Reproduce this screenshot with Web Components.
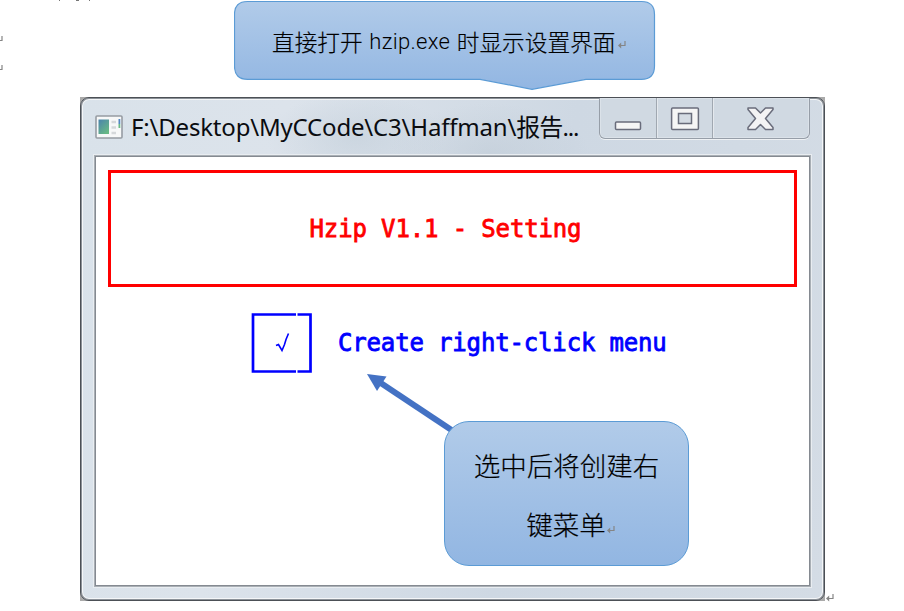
<!DOCTYPE html>
<html lang="zh-CN"><head><meta charset="utf-8"><title>Hzip</title>
<style>
html,body{margin:0;width:904px;height:611px;overflow:hidden;background:#fff}
</style></head><body><hzip-page></hzip-page>
<script>
function define(name, html){
  customElements.define(name, class extends HTMLElement{
    constructor(){super();const t=document.createElement('template');t.innerHTML=html;
      this.attachShadow({mode:'open'}).append(t.content.cloneNode(true));}
  });
}
define('return-mark', `<style>:host{display:inline-block;width:8px;height:9px}svg{display:block}</style>
<svg width="8" height="9" viewBox="0 0 8 9"><path d="M7 1V5.5H2" fill="none" stroke="#858585" stroke-width="1.2"/><path d="M0 5.5L3.2 2.6V8.4Z" fill="#858585"/></svg>`);

define('app-icon', `<style>:host{display:block;width:28px;height:24px;flex:none}</style>
<svg width="28" height="24" viewBox="0 0 28 24"><defs><linearGradient id="g" x1="0" y1="0" x2=".7" y2="1"><stop offset="0" stop-color="#4b83ad"/><stop offset="1" stop-color="#68b985"/></linearGradient></defs>
<rect x="1" y="1" width="26" height="22" rx="1" fill="#f7f8f8" stroke="#969ca3" stroke-width="1.6"/>
<rect x="3.5" y="4.5" width="10.5" height="14.5" fill="url(#g)"/>
<path d="M16.5 7h4.5M16.5 12.5h4.5M16.5 18h4.5" stroke="#d5d8da" stroke-width="2.6"/>
<path d="M24.4 4v5" stroke="#5287c2" stroke-width="1.8"/><path d="M24.4 9v4" stroke="#69ba86" stroke-width="1.8"/></svg>`);

define('caption-buttons', `<style>:host{display:grid;grid-template-columns:57px 56px 1fr;width:211px;height:41px;box-sizing:border-box;border:1px solid #969ea8;border-top:0;border-radius:0 0 6px 6px;box-shadow:inset 0 0 0 1px #e6ebf080,0 1px 0 #eef1f4;flex:none;background:#d0d9e2}
div{display:flex;justify-content:center;border-right:1px solid #a0a8b1;box-shadow:1px 0 #e4e9ee}div:last-child{border:0;box-shadow:none}svg{display:block}</style>
<div><svg width="56" height="40"><rect x="15.5" y="24" width="25" height="7.4" rx="1" fill="#f5f5f5" stroke="#696c7b" stroke-width="1.5"/></svg></div>
<div><svg width="56" height="40"><g fill="#f5f5f5" stroke="#696c7b" stroke-width="1.5"><rect x="14.6" y="10" width="26.8" height="21.5" rx="1"/><rect x="21.5" y="15.5" width="13" height="10" fill="#d5dce4"/></g></svg></div>
<div><svg width="96" height="40"><path d="M35 10H42.5L47.5 15L52.5 10H60V11.5L52.5 20.5L60 29.5V31.5H52.5L47.5 26.5L42.5 31.5H35V29.5L42.5 20.5L35 11.5Z" fill="#f3f3f4" stroke="#696c7b" stroke-width="1.5" stroke-linejoin="round"/></svg></div>`);

define('title-bar', `<style>:host{display:flex;height:58px;align-items:flex-start;justify-content:space-between}
.l{display:flex;align-items:center;padding-top:7px;height:43px;gap:8px;white-space:nowrap}
.t{font:24px/32px "Noto Sans","Noto Sans CJK SC",sans-serif;color:#0a0c10;letter-spacing:-.19px}.c{letter-spacing:-.9px}.d{letter-spacing:-1.1px}</style>
<div class="l"><app-icon></app-icon><span class="t">F:\\Desktop\\MyCCode\\C3\\Haffman\\<span class="c">报告</span><span class="d">...</span></span></div><caption-buttons></caption-buttons>`);

define('check-box', `<style>:host{display:block;width:61px;height:60px;flex:none}svg{display:block}</style><svg width="61" height="60"><path d="M45 1.5H2V58.5H45M46.5 1.5H59.5V58.5H46.5" fill="none" stroke="#00f" stroke-width="2.7"/><path d="M25 32.5L27.5 31.5L31 37.5L33.5 31.5L35 26.5L37.5 20.5" fill="none" stroke="#00f" stroke-width="1.6"/></svg>`);

define('console-view', `<style>:host{display:block;box-sizing:border-box;height:430px;background:#fff;border:1px solid #858a91;padding:13px 12px;box-shadow:0 0 0 1px #a9afb5,0 0 0 2px #e9edf1;font:24px/32px "DejaVu Sans Mono",monospace;white-space:nowrap}
.head{box-sizing:border-box;width:689px;height:117px;border:3px solid red;color:red;display:flex;justify-content:center;padding-top:40px;-webkit-text-stroke:.8px red;padding-right:14px;letter-spacing:-.14px}
.row{display:flex;margin:26px 0 0 143px;color:#00f;gap:26px}.row span{padding-top:14px;letter-spacing:-.16px;-webkit-text-stroke:.8px #00f}</style>
<div class="head"><span>Hzip V1.1 - Setting</span></div>
<div class="row"><check-box></check-box><span>Create right-click menu</span></div>`);

define('app-window', `<style>:host{display:block;box-sizing:border-box;width:745px;height:504px;padding:0 14px;border:1px solid #4c5056;border-radius:9px;background:radial-gradient(ellipse 90px 45px at 37% 8%,#b9c7d366,transparent),radial-gradient(ellipse 100px 50px at 55% 11%,#b7c4d066,transparent),linear-gradient(100deg,#d9e2ea 0,#dce3eb 25%,#ced8e3 60%,#d4dce5);box-shadow:inset 0 0 0 1px #8b9198,inset 0 0 0 2px #f4f6f8}</style>
<title-bar></title-bar><console-view></console-view>`);

define('top-callout', `<style>:host{display:block;position:relative;width:422px;height:90px;font:300 22.7px/34px "Noto Sans CJK SC",sans-serif;color:#000}
svg{position:absolute;inset:0}.t{position:relative;padding:25px 0 0 38px;white-space:nowrap;display:flex;align-items:center;-webkit-text-stroke:.2px #000}.en{width:94px;text-align:center;font-family:Roboto,sans-serif;font-size:22px;letter-spacing:.3px;-webkit-text-stroke:0}return-mark{margin:5px 0 0 2px}</style>
<svg width="422" height="90"><defs><linearGradient id="g" x2="0" y2="1"><stop stop-color="#b1cbe9"/><stop offset="1" stop-color="#92b6e2"/></linearGradient></defs><path d="M13.5 1.5H407.5Q420.5 1.5 420.5 14.5V66Q420.5 79.3 407.5 79.3H352L298 89.3L246 79.3H13.5Q.5 79.3 .5 66V14.5Q.5 1.5 13.5 1.5Z" fill="url(#g)" stroke="#5b9bd5" stroke-width="1.2"/></svg>
<div class="t"><span>直接打开</span><span class="en">hzip.exe</span><span>时显示设置界面</span><return-mark></return-mark></div>`);

define('menu-callout', `<style>:host{display:block;box-sizing:border-box;width:245px;height:145px;border:1px solid #5b9bd5;border-radius:25px;background:linear-gradient(#b1cbe9,#92b6e2);font:300 26.5px/59px "Noto Sans CJK SC",sans-serif;color:#000;text-align:center;padding-top:13px;white-space:nowrap;-webkit-text-stroke:.2px #000}
div:first-child{padding-right:3px}div:last-child{padding-left:8px}return-mark{margin-left:1px;position:relative;top:-1px}</style>
<div>选中后将创建右</div><div>键菜单<return-mark></return-mark></div>`);

define('hzip-page', `<style>:host{display:block;position:relative;width:904px;height:611px;overflow:hidden;background:#fff}
app-window{position:absolute;left:80px;top:97px}.corners{position:absolute;left:80px;top:97px;width:745px;height:504px;background:#aaa}
top-callout{position:absolute;left:234px;top:0}menu-callout{position:absolute;left:444px;top:421px}
.arrow,.marks{position:absolute;left:0;top:0}.m{position:absolute}</style>
<svg class="marks" width="100" height="10"><path d="M59.5 0V1M76 .5H79M89.5 0V1" stroke="#777"/></svg>
<div class="corners"></div><app-window></app-window><top-callout></top-callout>
<svg class="arrow" width="904" height="611"><path d="M380 382.5L453 431" stroke="#4472c4" stroke-width="6"/><path d="M367 374L386.5 376.5L377 391Z" fill="#4472c4"/></svg>
<menu-callout></menu-callout>
<return-mark class="m" style="left:-5px;top:35px"></return-mark><return-mark class="m" style="left:-5px;top:64px"></return-mark><return-mark class="m" style="left:826px;top:593px"></return-mark>`);
</script></body></html>
